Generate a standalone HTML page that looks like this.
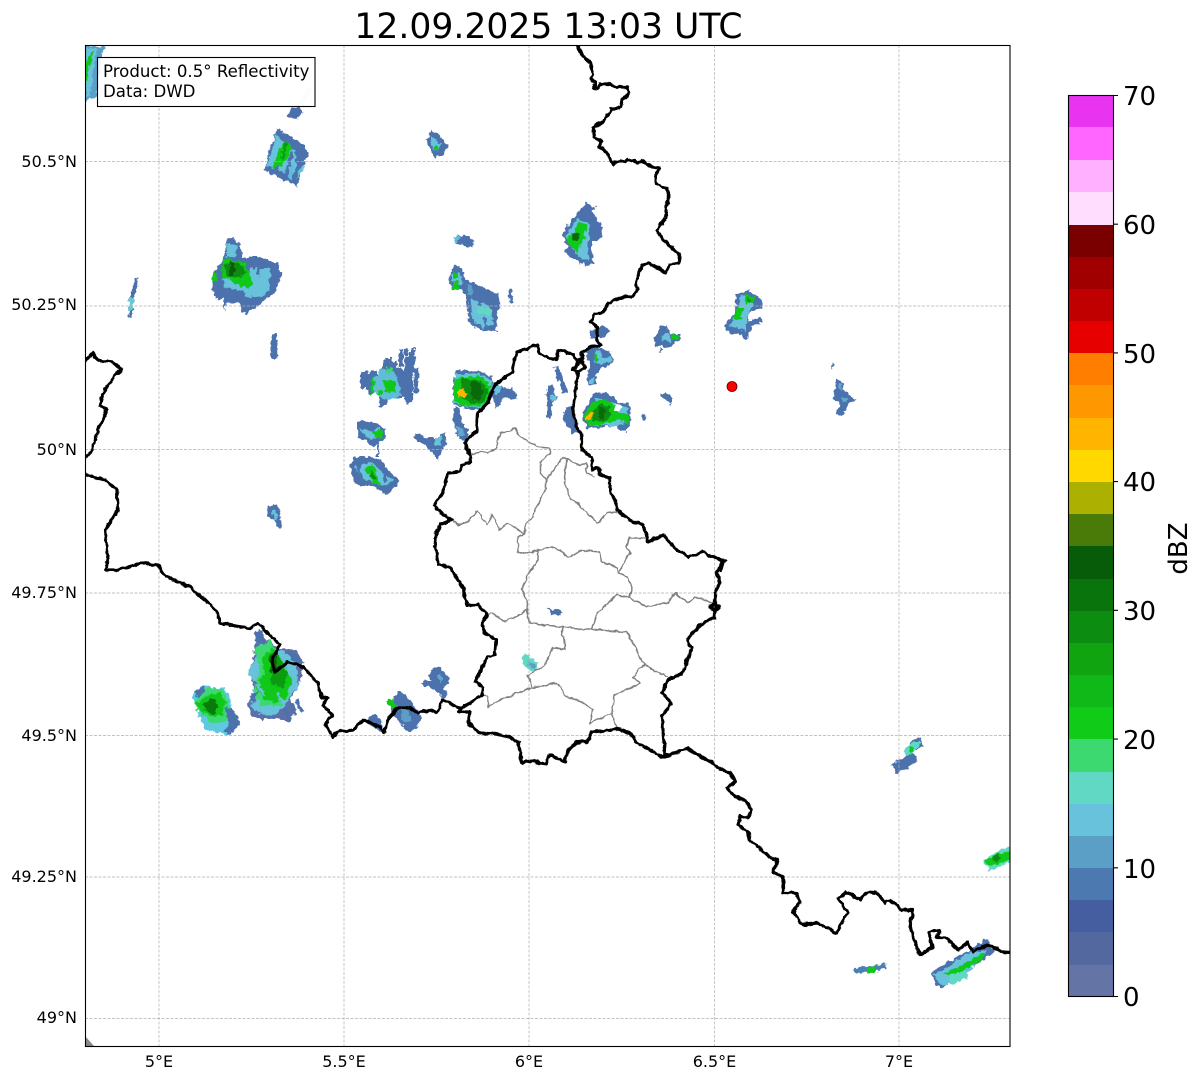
<!DOCTYPE html>
<html><head><meta charset="utf-8"><title>Radar</title>
<style>html,body{margin:0;padding:0;background:#fff}svg{display:block}text{font-family:"DejaVu Sans","Liberation Sans",sans-serif;fill:#000}</style></head>
<body>
<svg xmlns="http://www.w3.org/2000/svg" width="1202" height="1081" viewBox="0 0 1202 1081">
<rect width="1202" height="1081" fill="#fff"/>
<defs><clipPath id="c"><rect x="85.5" y="45.5" width="924.5" height="1001"/></clipPath>
<filter id="rough" filterUnits="userSpaceOnUse" x="0" y="0" width="1202" height="1081" color-interpolation-filters="sRGB"><feTurbulence type="fractalNoise" baseFrequency=".22" numOctaves="2" seed="4"/><feDisplacementMap in="SourceGraphic" scale="6" xChannelSelector="R" yChannelSelector="G"/></filter>
<filter id="wig" filterUnits="userSpaceOnUse" x="0" y="0" width="1202" height="1081" color-interpolation-filters="sRGB"><feTurbulence type="fractalNoise" baseFrequency=".16" numOctaves="2" seed="9"/><feDisplacementMap in="SourceGraphic" scale="4" xChannelSelector="R" yChannelSelector="G"/></filter>
</defs>
<g clip-path="url(#c)">
<path d="M85 1046V1036L94 1046Z" fill="#888"/>
<!-- radar -->
<g stroke="none" filter="url(#rough)">
<!-- top-left -->
<path fill="#5c9fc6" d="M85 46H105L101 60 99 80 97 97 88 99 85 104Z"/>
<path fill="#68c2dc" d="M86 48H98L93 70 90 96 86 98Z"/>
<path fill="#10c818" d="M85 62 94 50 90 66 87 80 85 84Z"/>
<!-- under legend -->
<path fill="#4c70ac" d="M291 109 299 105 303 112 296 120 287 116Z"/>
<path fill="#dcefe6" d="M298 105 310 86 315 85 302 106Z"/>
<!-- blob top 287,158 -->
<path fill="#4c72ae" d="M277 129 285 133 292 137 304 144 309 156 302 165 298 187 288 182 278 177 264 170 268 155Z"/>
<path fill="#68c2dc" d="M276 134 283 142 294 150 298 166 305 168 296 178 283 172 266 166 272 150Z"/>
<path fill="#60bcd8" d="M282 171 290 160 296 178 292 180Z"/>
<path fill="#10c818" d="M279 150 285 142 292 146 288 158 280 167 273 168Z"/>
<path fill="#0c9a10" d="M284 143 288 144 283 160 281 158Z"/>
<path fill="#4c72ae" d="M296 158 303 155 306 162 300 170 296 168ZM296 144 304 148 303 155 295 152Z"/>
<path fill="none" stroke="#4c72ae" stroke-width="3" d="M292 152 286 176M299 160 294 180M278 166 274 174"/>
<!-- blob 245,275 -->
<path fill="#4c72ae" d="M227 238 240 242 242 257 257 257 277 262 282 273 276 292 265 300 257 307 248 313 242 312 240 303 227 302 225 310 224 298 215 300 212 288 213 273 223 260Z"/>
<path fill="#68c2dc" d="M226 243 237 246 236 256 227 258ZM251 268 270 268 271 288 262 298 246 296 240 290 226 288 222 278 240 276Z"/>
<path fill="#10c818" d="M223 258 245 262 250 270 252 287 238 286 228 278 222 278Z"/>
<path fill="#0c8c10" d="M224 265 238 262 246 272 240 278 226 276Z"/>
<path fill="#0a5c0a" d="M230 261 235 262 234 276 229 276Z"/>
<path fill="#10c818" d="M212 273 217 273 217 282 212 282Z"/>
<path fill="#4c72ae" d="M255 258 262 258 262 268 255 268Z"/>
<path fill="none" stroke="#4c72ae" stroke-width="3" d="M271 264V292M258 268V276M248 262V270M236 290V300"/>
<!-- thin 132,298 -->
<path fill="#4c72ae" d="M136 278 138 279 135 296 134 298 132 318 129 319 130 298Z"/>
<path fill="#68c8d8" d="M129 298 134 298 133 310 129 310Z"/>
<!-- 273,346 -->
<path fill="#4c72ae" d="M272 334 277 334 278 358 272 359 270 350Z"/>
<!-- 437,144 -->
<path fill="#4c72ae" d="M431 130 436 132 444 140 448 146 442 156 436 158 430 150 426 142Z"/>
<path fill="#68c2dc" d="M431 136 441 144 438 152 431 146Z"/>
<path fill="#10c818" d="M435 146 439 146 438 151 435 150Z"/>
<!-- 463,241 -->
<path fill="#4c72ae" d="M458 235 468 236 475 241 471 248 463 245 455 243Z"/>
<path fill="#60bcd8" d="M455 236 459 236 457 243 454 244Z"/>
<!-- 475,303 -->
<path fill="#4c72ae" d="M454 266 462 268 466 280 472 282 490 291 498 293 500 306 496 326 498 331 486 331 474 326 469 322 466 298 462 290 452 288 448 280Z"/>
<path fill="#68c2dc" d="M451 274 461 272 463 284 453 286ZM470 298 490 306 494 324 484 328 472 320Z"/>
<path fill="#10c818" d="M453 272 458 272 458 278 453 278ZM453 281 459 281 458 290 453 290Z"/>
<path fill="#60d8c4" d="M478 306 492 310 490 316 476 312Z"/>
<path fill="#5c9fc6" d="M468 285 473 287 472 296 467 294Z"/>
<path fill="none" stroke="#4c72ae" stroke-width="2.5" d="M484 316 486 328M478 300 480 306"/>
<!-- 510,296 -->
<path fill="#4c72ae" d="M509 289 513 291 512 298 514 302 510 303 508 296Z"/>
<!-- 580,233 -->
<path fill="#4c72ae" d="M586 203 596 207 592 212 603 228 602 238 592 242 592 252 594 264 586 266 572 258 564 252 568 246 562 236 574 216Z"/>
<path fill="#68c2dc" d="M578 218 590 224 588 244 588 260 580 258 570 246 566 236Z"/>
<path fill="#10c818" d="M578 222 587 226 584 240 577 252 570 246 566 238 575 232Z"/>
<path fill="#0a6a0a" d="M572 233 580 232 578 242 573 241Z"/>
<!-- 745,313 -->
<path fill="#4c72ae" d="M735 294 749 290 762 300 763 308 754 310 748 314 748 322 760 317 762 321 752 326 750 332 746 340 742 339 740 332 730 334 724 326 728 320 734 315 736 304Z"/>
<path fill="#68c2dc" d="M740 295 754 298 752 308 746 320 746 332 737 328 730 326 738 312Z"/>
<path fill="#10c818" d="M745 294 756 298 752 303 745 303ZM738 308 744 308 741 320 735 320 735 312Z"/>
<path fill="#0c9a10" d="M748 298 752 300 750 303 747 302Z"/>
<!-- 838,400 -->
<path fill="#4c72ae" d="M836 380 840 380 843 386 845 392 853 398 856 400 849 404 846 412 840 416 836 414 840 406 834 398Z"/>
<path fill="#60a8d0" d="M838 383 841 385 842 390 838 388ZM843 396 848 398 846 404 842 402Z"/>
<path fill="#4c72ae" d="M832 363 834 364 832 369 831 367Z"/>
<!-- 660,338 -->
<path fill="#4c72ae" d="M660 326 666 325 670 333 678 335 682 338 672 346 664 346 656 348 654 340Z"/>
<path fill="#68c2dc" d="M664 333 671 334 670 342 662 340Z"/>
<path fill="#10c818" d="M672 335 678 336 676 340 671 340Z"/>
<path fill="#4c72ae" d="M660 348 664 350 660 353ZM666 392 672 397 672 404 666 400 660 394Z"/>
<path fill="#4c72ae" d="M641 414 645 416 647 420 643 419Z"/>
<!-- 598,335 column -->
<path fill="#4c72ae" d="M590 330 605 326 610 332 604 338 596 338 590 338ZM598 347 610 352 614 360 610 366 602 368 596 374 596 384 588 386 587 376 590 366 586 352 592 346Z"/>
<path fill="#68c2dc" d="M596 350 600 352 604 358 611 356 611 362 600 364 594 362ZM590 378 594 376 593 384 589 384Z"/>
<path fill="#10c818" d="M594 353 598 354 598 362 595 360Z"/>
<!-- 605,412 -->
<path fill="#4c72ae" d="M582 415 593 393 607 392 617 402 630 403 631 420 626 432 616 426 607 427 587 428Z"/>
<path fill="#68c2dc" d="M586 412 596 398 612 402 628 408 628 422 618 426 596 426 588 424Z"/>
<path fill="#10c818" d="M583 416 594 400 610 400 618 412 630 416 628 424 616 420 600 426 588 424Z"/>
<path fill="#0c8c10" d="M590 415 600 404 608 406 612 416 604 421 594 421Z"/>
<path fill="#0a6a0a" d="M598 408 605 408 604 418 598 418Z"/>
<path fill="#ffb400" d="M585 416 590 412 594 414 590 420 586 420Z"/>
<path fill="#fff" d="M615 404 621 405 620 411 615 410Z"/>
<!-- 572,415 -->
<path fill="#4c72ae" d="M566 408 572 406 576 420 578 432 572 434 568 428 562 416Z"/>
<!-- 550,393 -->
<path fill="#4c72ae" d="M554 367 558 366 568 391 563 393ZM550 384 552 384 557 398 552 404 550 419 547 418 547 398 545 394Z"/>
<path fill="#68c2dc" d="M550 395 556 396 554 402 551 402Z"/>
<!-- 388,382 -->
<g stroke="#4c72ae" stroke-width="4.2" fill="none">
<path d="M401 349V367M406 349V355M413 349V372M416 368V393M411 352V404M407 356V404M403 370V398M399 368V398M395 362V398M391 358V398M387 358V399M385 360V405M381 372V406M375 372V390M371 372V394M367 372V390M363 372V388"/>
</g>
<path fill="#60bcd8" d="M382 368 394 372 398 382 402 396 388 400 380 396 372 392 372 382Z"/>
<path fill="#10c818" d="M384 380 395 380 396 392 384 392ZM371 378 374 378 375 394 371 394ZM378 390 382 390 382 395 378 395Z"/>
<path fill="#3cd870" d="M386 366 392 368 390 374 386 372Z"/>
<!-- 473,390 -->
<path fill="#4c72ae" d="M457 370 480 371 493 377 492 395 485 408 470 410 453 405 453 380Z"/>
<path fill="#60c8d0" d="M455 374 480 374 492 380 490 396 482 408 465 407 453 402Z"/>
<path fill="#10c818" d="M455 378 480 376 491 386 488 400 480 407 462 406 453 398Z"/>
<path fill="#0c8c10" d="M462 378 480 380 488 390 484 402 472 404 462 398Z"/>
<path fill="#0a6a0a" d="M470 381 480 382 483 392 480 400 472 400Z"/>
<path fill="#ffb400" d="M459 389 463 388 464 392 467 392 466 396 458 398Z"/>
<path fill="#4c72ae" d="M493 385 506 387 512 388 514 393 518 396 517 400 510 398 504 398 500 405 496 409 494 399 492 398Z"/>
<path fill="#68c2dc" d="M494 386 500 386 501 394 494 394Z"/>
<path fill="#4c72ae" d="M454 408 460 408 462 424 468 430 468 440 460 441 456 430 453 420Z"/>
<path fill="#60a8d0" d="M456 426 463 428 465 436 459 436Z"/>
<!-- 372,433 -->
<path fill="#4c72ae" d="M358 421 372 422 384 428 386 436 380 443 372 446 366 440 358 438Z"/>
<path fill="#68c2dc" d="M360 428 372 431 380 428 382 436 374 440 362 434Z"/>
<path fill="#10c818" d="M372 431 382 431 382 438 374 438Z"/>
<path stroke="#4c72ae" stroke-width="2" fill="none" d="M378 444V456"/>
<!-- 430,442 -->
<path fill="#4c72ae" d="M414 434 420 434 426 438 436 438 445 432 446 444 442 452 438 460 432 452 424 444 416 442Z"/>
<path fill="#68c2dc" d="M434 437 442 436 441 446 435 446Z"/>
<!-- 373,475 -->
<path fill="#4c72ae" d="M353 457 358 457 372 457 381 460 388 470 399 480 394 490 386 495 374 486 362 486 354 482 350 466Z"/>
<path fill="#68c2dc" d="M354 466 372 462 380 470 392 480 388 486 376 484 362 478Z"/>
<path fill="#10c818" d="M364 469 372 464 376 472 380 484 374 484Z"/>
<path fill="#0c8c10" d="M370 470 374 472 375 480 371 478Z"/>
<path fill="none" stroke="#4c72ae" stroke-width="2.5" d="M358 464 362 480M384 470 386 482"/>
<!-- 275,515 -->
<path fill="#4c72ae" d="M267 507 276 504 280 512 282 527 278 528 274 520 268 516Z"/>
<path fill="#68c2dc" d="M271 510 276 510 278 520 274 520Z"/>
<!-- lux small -->
<path fill="#4c72ae" d="M547 607 552 609 558 610 563 612 560 616 553 615 550 612Z"/>
<path fill="#60d8c4" d="M521 657 526 654 538 663 537 669 530 671 524 666Z"/>
<path fill="#5c9fc6" d="M528 661 537 666 534 669 527 665Z"/>
<!-- 272,680 -->
<path fill="#5c70a8" d="M256 630 268 640 280 648 296 650 304 662 302 676 296 690 290 700 296 708 290 722 278 718 262 720 252 716 248 705 254 690 250 670 254 656Z"/>
<path fill="#68c2dc" d="M260 644 280 650 296 660 298 686 288 700 276 716 254 712 250 700 256 684 248 672 254 660Z"/>
<path fill="#3cd870" d="M254 650 270 640 282 660 286 676 290 696 280 706 262 706 254 690 260 670Z"/>
<path fill="#10c818" d="M262 658 272 648 284 664 292 680 286 700 274 702 264 700 256 686 264 674Z"/>
<path fill="#0c9a10" d="M268 654 276 652 288 672 284 688 270 684 272 670Z"/>
<path fill="#0a6a0a" d="M270 654 276 656 278 672 270 672Z"/>
<path fill="#4c72ae" d="M287 650 298 656 304 668 292 660ZM250 695 258 690 256 702 252 704ZM255 632 262 630 266 640 258 644Z"/>
<path stroke="#4c72ae" stroke-width="3.5" fill="none" d="M284 706 290 720M296 700 302 712M292 704 296 715"/>
<path stroke="#68c2dc" stroke-width="3" fill="none" d="M258 684 264 696M278 694 284 704"/>
<!-- 215,708 -->
<path fill="#60c8e0" d="M205 684 213 688 224 688 228 694 232 708 240 722 226 736 216 732 210 730 204 728 196 706 192 694Z"/>
<path fill="#3cd870" d="M208 688 224 690 228 704 232 716 224 722 212 724 196 708 194 702Z"/>
<path fill="#10c818" d="M195 704 206 696 220 692 226 702 222 716 210 716 202 712Z"/>
<path fill="#0a7a0c" d="M202 704 214 698 218 706 214 714 206 712Z"/>
<path fill="#4c72ae" d="M226 708 232 708 240 722 232 734 224 732 228 726ZM194 692 204 686 206 692 198 698Z"/>
<!-- 435,682 -->
<path fill="#4c72ae" d="M434 668 440 666 450 680 444 688 448 696 444 698 434 690 422 684 424 680 432 680 428 676Z"/>
<path fill="#60a8d0" d="M440 674 444 678 440 682 438 678Z"/>
<!-- 402,710 -->
<path fill="#4c72ae" d="M398 691 404 694 416 708 422 718 416 730 408 732 394 716 390 704Z"/>
<path fill="#10c818" d="M386 702 392 698 397 708 392 710Z"/>
<path fill="#5c9fc6" d="M398 706 408 710 412 722 404 722Z"/>
<!-- 375,723 -->
<path fill="#4c72ae" d="M371 715 376 714 384 726 381 732 372 726 366 722Z"/>
<!-- 905,757 -->
<path fill="#4c72ae" d="M912 740 920 738 923 746 912 752 918 760 908 768 896 773 891 765 904 757 908 752Z"/>
<path fill="#60d8c4" d="M903 752 914 742 922 742 916 750 908 756Z"/>
<path fill="#10c818" d="M909 747 914 747 913 752 909 752Z"/>
<!-- 997,858 -->
<path fill="#60d8c4" d="M982 862 1000 850 1016 846V860L990 870Z"/>
<path fill="#10c818" d="M984 862 998 853 1016 850V858L990 866Z"/>
<path fill="#0c8c10" d="M992 858 998 854 1002 858 996 862Z"/>
<!-- 870,969 -->
<path fill="#4c80b4" d="M854 968 870 966 886 963 887 969 870 972 855 973Z"/>
<path fill="#10c818" d="M866 968 876 966 877 972 867 974Z"/>
<!-- 960,965 -->
<path fill="#4c72ae" d="M932 972 955 958 972 948 986 939 995 952 980 962 962 975 942 988 936 986Z"/>
<path fill="#68c2dc" d="M934 974 950 965 970 952 988 950 980 960 968 972 950 984 940 984Z"/>
<path fill="#10c818" d="M942 974 962 966 978 955 985 952 982 960 968 968 952 976Z"/>
<path fill="#60d8c4" d="M950 976 966 970 968 978 950 985Z"/>
</g>
<!-- grid -->
<g stroke="#b0b0b0" stroke-width=".7" stroke-dasharray="3 1.5" fill="none">
<path d="M159 45V1046M344 45V1046M529 45V1046M714.5 45V1046M899 45V1046M85 161.5H1010M85 306H1010M85 449.5H1010M85 593H1010M85 735.5H1010M85 877H1010M85 1018.5H1010"/>
</g>
<!-- canton lines -->
<g fill="none" stroke="#808080" stroke-width="1.5" stroke-linejoin="round" filter="url(#wig)">
<path d="M472 455 480 451 488 453 497 448 500 433 504 433 515 429 522 438 537 447 550 448 550 453 540 463 540 473 546 480 545 490 535 510 533 518 527 522 524 533 518 537 518 552 520 554 538 550 552 547 560 550 568 558 582 550 600 552 602 562 617 568 618 573 630 553 627 547 630 538 645 538"/>
<path d="M546 480 563 457 567 458 577 465 586 463 587 473 595 477"/>
<path d="M567 458 564 483 570 498 582 508 598 523 607 513 617 512"/>
<path d="M452 520 458 525 468 522 477 511 487 525 493 515 499 530 507 523 523 533"/>
<path d="M538 550 538 560 527 575 527 580 522 588 528 603 527 610 505 622 492 613 488 615"/>
<path d="M527 610 530 623 545 625 563 627 578 629 592 629 610 631 627 632 637 650 644 664 633 677 640 683 633 687 614 695 612 713 590 723 592 710 583 702 567 697 557 683 533 688 528 675 545 665 553 647 565 650 562 630 563 627"/>
<path d="M592 629 597 613 617 595 627 596 647 607 668 602 675 593 688 603 695 597 715 603"/>
<path d="M630 597 632 587 627 577 619 573 618 573"/>
<path d="M644 664 657 672 668 677"/>
<path d="M532 688 517 693 493 703 488 707 488 696 482 695"/>
<path d="M612 713 617 728"/>
</g>
<!-- black borders -->
<g fill="none" stroke="#000" stroke-width="3.2" stroke-linejoin="round" stroke-linecap="round" filter="url(#wig)">
<path d="M575 38 578 46 583 57 590 63 593 75 591 78 595 83 594 88 597 89 600 84 608 84 617 87 627 87 629 92 622 100 621 106 616 109 612 109 605 118 602 122 593 128 594 137 602 141 598 147 603 149 608 155 613 164 620 161 625 162 628 159 637 163 643 161 652 167 659 168 655 177 656 184 662 187 667 188 669 197 667 203 666 210 666 217 657 230 663 240 672 247 680 257 679 263 670 265 664 273 662 270 655 267 650 263 642 266 639 273 636 282 637 290 632 297 623 297 608 303 603 313 595 314 591 322 597 327 597 340 600 345 590 348 582 352 582 358 577 361 573 355 563 351 558 350 557 359 547 358 540 353 538 345 528 348 517 352 512 372 495 385 488 402 478 413 477 430 465 443 470 455 471 462 462 465 459 472 448 473 443 493 434 505 438 510 451 520 440 525 436 533 435 547 439 565 450 567 463 588 467 605 478 605 488 615 482 623 485 633 496 640 495 655 487 657 482 668 475 682 483 687 482 695 462 708 459 712 470 712 468 723 480 733 496 734 510 737 518 742 522 762 533 761 545 764 550 755 565 762 568 750 577 742 587 742 592 732 618 729 630 733 637 743 650 750 663 757 670 755 687 748 702 757 713 763 720 769 730 772 735 781 727 788 735 797 745 800 752 810 748 818 740 816 738 825 748 832 750 840 758 847 770 857 777 860 773 872 783 877 783 893 797 893 800 902 793 912 802 925 817 923 837 933 843 920 848 913 838 898 847 892 860 900 868 892 877 893 885 903 890 900 902 910 913 910 910 927 917 947 920 955 932 947 929 932 940 930 937 938 947 938 958 950 968 943 973 952 987 945 1003 952 1018 953"/>
<path d="M582 358 573 370 578 372 585 368 583 362 577 361"/>
<path d="M578 372 575 395 573 413 577 427 582 437 582 450 592 458 592 470 598 467 600 475 610 478 610 493 615 500 617 510 630 520 643 525 648 542 663 535 677 550 688 557 703 552 715 558 725 560 720 570 723 562 717 572 720 583 715 593 715 605 720 607 715 611 710 607 715 603 715 617 700 625 687 640 692 647 683 673 668 680 662 693 671 703 662 717 665 757"/>
<path d="M78 362 86 360 93 353 98 360 113 362 121 369 108 385 102 395 100 405 107 410 98 430 92 450 78 466"/>
<path d="M78 473 105 480 117 490 118 510 105 530 108 555 106 570 118 570 135 565 143 563 158 565 165 576 190 587 205 600 218 613 220 623 235 626 250 628 258 623 280 645 275 652 272 662 275 672 287 662 303 667 317 682 322 697 327 698 323 706 332 715 325 725 333 737 338 732 353 730 363 720 380 727 384 732 389 718 397 708 410 708 418 713 430 710 437 713 443 700 457 707 462 708"/>
</g>
<circle cx="732" cy="386.5" r="5" fill="#f00" stroke="#500" stroke-width=".8"/>
</g>
<!-- frame -->
<rect x="85.5" y="45.5" width="924.5" height="1001" fill="none" stroke="#000" stroke-width="1.1"/>
<!-- legend -->
<rect x="97.5" y="57.5" width="217.5" height="49" fill="#fff" fill-opacity=".85" stroke="#000" stroke-width="1.1"/>
<text x="103" y="77" font-size="16.6">Product: 0.5° Reflectivity</text>
<text x="103" y="97" font-size="16.6">Data: DWD</text>
<!-- title -->
<text x="548.5" y="38" font-size="34.6" text-anchor="middle">12.09.2025 13:03 UTC</text>
<!-- axis labels -->
<g font-size="16" text-anchor="end">
<text x="77" y="167">50.5°N</text><text x="77" y="310">50.25°N</text><text x="77" y="455">50°N</text><text x="77" y="598">49.75°N</text><text x="77" y="741">49.5°N</text><text x="77" y="882">49.25°N</text><text x="77" y="1023">49°N</text>
</g>
<g font-size="16" text-anchor="middle">
<text x="159" y="1067">5°E</text><text x="344" y="1067">5.5°E</text><text x="529" y="1067">6°E</text><text x="714.5" y="1067">6.5°E</text><text x="899" y="1067">7°E</text>
</g>
<!-- colorbar -->
<g shape-rendering="crispEdges">
<rect x="1068" y="964" width="46" height="33" fill="#6474a4"/>
<rect x="1068" y="932" width="46" height="33" fill="#5468a0"/>
<rect x="1068" y="899" width="46" height="33" fill="#445ea0"/>
<rect x="1068" y="867" width="46" height="33" fill="#4c7ab0"/>
<rect x="1068" y="835" width="46" height="33" fill="#5c9fc6"/>
<rect x="1068" y="803" width="46" height="33" fill="#68c2dc"/>
<rect x="1068" y="771" width="46" height="33" fill="#60d8c4"/>
<rect x="1068" y="739" width="46" height="33" fill="#3cd870"/>
<rect x="1068" y="706" width="46" height="33" fill="#10cc18"/>
<rect x="1068" y="674" width="46" height="33" fill="#10b818"/>
<rect x="1068" y="642" width="46" height="33" fill="#10a410"/>
<rect x="1068" y="610" width="46" height="33" fill="#0c8c10"/>
<rect x="1068" y="578" width="46" height="33" fill="#0a740c"/>
<rect x="1068" y="546" width="46" height="33" fill="#065c08"/>
<rect x="1068" y="513" width="46" height="33" fill="#4a7a08"/>
<rect x="1068" y="481" width="46" height="33" fill="#acb000"/>
<rect x="1068" y="449" width="46" height="33" fill="#ffd800"/>
<rect x="1068" y="417" width="46" height="33" fill="#ffb400"/>
<rect x="1068" y="385" width="46" height="33" fill="#ff9800"/>
<rect x="1068" y="352" width="46" height="33" fill="#ff7e00"/>
<rect x="1068" y="320" width="46" height="33" fill="#e60000"/>
<rect x="1068" y="288" width="46" height="33" fill="#c00000"/>
<rect x="1068" y="256" width="46" height="33" fill="#a00000"/>
<rect x="1068" y="224" width="46" height="33" fill="#7a0000"/>
<rect x="1068" y="192" width="46" height="33" fill="#ffddff"/>
<rect x="1068" y="159" width="46" height="33" fill="#ffb0ff"/>
<rect x="1068" y="127" width="46" height="33" fill="#ff66ff"/>
<rect x="1068" y="95" width="46" height="32" fill="#e833f0"/>
</g>
<rect x="1068.5" y="95.5" width="45" height="901" fill="none" stroke="#000" stroke-width="1.1"/>
<path stroke="#000" stroke-width="1.1" d="M1113.5 95.5H1118M1113.5 224.2H1118M1113.5 352.9H1118M1113.5 481.6H1118M1113.5 610.3H1118M1113.5 739.1H1118M1113.5 867.8H1118M1113.5 996.5H1118"/>
<g font-size="26">
<text x="1123" y="105">70</text><text x="1123" y="234">60</text><text x="1123" y="363">50</text><text x="1123" y="491">40</text><text x="1123" y="620">30</text><text x="1123" y="749">20</text><text x="1123" y="878">10</text><text x="1123" y="1006">0</text>
</g>
<text transform="translate(1187 548.5) rotate(-90)" font-size="26" text-anchor="middle">dBZ</text>
</svg>
</body></html>
